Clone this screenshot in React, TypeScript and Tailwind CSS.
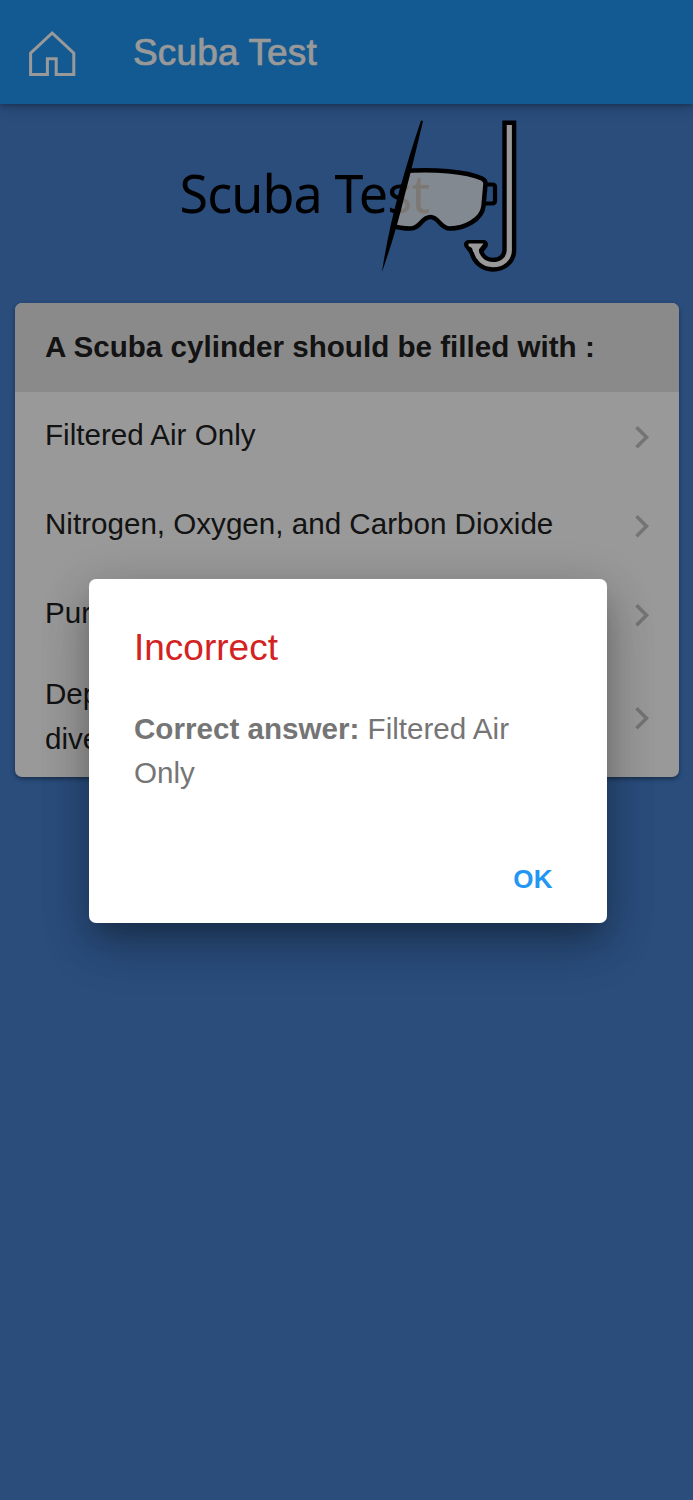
import clsx from "clsx";

// --- Quiz data ---

const QUESTION = "A Scuba cylinder should be filled with :";

const ANSWERS = [
    { id: "a", lines: ["Filtered Air Only"] },
    { id: "b", lines: ["Nitrogen, Oxygen, and Carbon Dioxide"] },
    { id: "c", lines: ["Pure Oxygen"] },
    { id: "d", lines: ["Depends on the depth of the", "dive"] },
];

function HomeIcon() {
    return (
        <svg width="50" height="50" viewBox="27 29 50 50" fill="none" stroke="white" strokeWidth="3">
            <path d="M52.2 33 L73.8 53.2 V74.5 H56.2 V58.7 H47.4 V74.5 H30.6 V53.2 Z" />
        </svg>
    );
}

function Chevron() {
    return (
        <svg width="16" height="26" viewBox="0 0 16 26" fill="none" stroke="#c2c2c5" strokeWidth="3.6">
            <path d="M1.500 3.300 L11.500 13.300 L1.500 23.300" />
        </svg>
    );
}

function Logo() {
    return (
        <svg className="block h-[199px] w-full" viewBox="0 104 693 199">
            <defs>
                <clipPath id="lineLeft">
                    <path d="M0 104 H426 L421 121 L382 272 H0 Z" />
                </clipPath>
                <clipPath id="lineRight">
                    <path d="M421 121 H693 V272 H382 Z" />
                </clipPath>
            </defs>

            {/* mask */}
            <path
                d="M402 171 C434 169 466 171 482 178.500 Q486 180.500 485.500 184 L483.500 206 C482 220 464 228.500 450 228.500 C440 228.500 439 217 430.500 217 C421 217 421 228.500 410 228.500 Q401 228.500 390 225.500 Z"
                fill="#dbe4f2"
                stroke="black"
                strokeWidth="4.500"
                strokeLinejoin="round"
                clipPath="url(#lineRight)"
            />
            <path d="M485.500 184.500 H492.500 Q495 184.500 495 187 V200.500 Q495 203.500 492 203.500 H484" fill="none" stroke="black" strokeWidth="4.200" />

            {/* wordmark, cut in two by the diagonal */}
            <g fontFamily="'Noto Sans', 'Open Sans', sans-serif" fontSize="52">
                <g clipPath="url(#lineLeft)" fill="black">
                    <text x="179.500" y="212.500" textLength="250.500">Scuba Test</text>
                </g>
                <g clipPath="url(#lineRight)" fill="#d0c9c0" aria-hidden="true">
                    <text x="179.500" y="212.500" textLength="250.500">Scuba Test</text>
                </g>
            </g>
            <path d="M421 120.500 L423 121 Q412 168 404.500 196 Q396 232 382 272 Q388 232 399.500 190 Q410 153 421 120.500 Z" fill="black" />

            {/* snorkel */}
            <path d="M509.300 120.500 V250 C509.300 259 502 264.700 493 264.700 C483.500 264.700 477 258 475.800 249" fill="none" stroke="black" strokeWidth="14" />
            <path d="M468.500 244.500 H483.500 L478.500 251 H473.500 Z" fill="black" stroke="black" strokeWidth="9" strokeLinejoin="round" />
            <path d="M509.300 125 V250 C509.300 259 502 264.700 493 264.700 C483.500 264.700 477 258 475.800 249" fill="none" stroke="white" strokeWidth="5.200" />
            <path d="M468.500 243.500 H483.500 L478.500 250 V252 H473.200 L472 248 L468.500 246 Z" fill="white" />
        </svg>
    );
}

function Answer({ lines }: { lines: string[] }) {
    return (
        <li
            className={clsx(
                "flex items-center justify-between pl-[30px] pr-[28px]",
                lines.length > 1 ? "h-[118px]" : "h-[89px]"
            )}
        >
            <div className={clsx("text-[29.6px] leading-[44.4px]", lines.length > 1 ? "pb-[3px]" : "pb-[2px]")}>
                {lines.map((line) => (
                    <div key={line}>{line}</div>
                ))}
            </div>
            <Chevron />
        </li>
    );
}

export default function App() {
    return (
        <div className="relative h-[1500px] w-[693px] overflow-hidden bg-[#4680cf] font-['Liberation_Sans',Arial,sans-serif] text-[#212121]">

            {/* Navbar */}
            <header className="relative flex h-[104px] items-center bg-[#2196f3] pl-[27px] text-white shadow-[0_2px_4px_rgba(0,0,0,0.2),0_3px_14px_rgba(0,0,0,0.22)]">
                <div className="mt-1">
                    <HomeIcon />
                </div>
                <h1 className="ml-14 text-[37px] leading-none tracking-[0.15px] [-webkit-text-stroke:0.7px_white]">Scuba Test</h1>
            </header>

            <Logo />

            {/* Question card */}
            <section className="ml-[15px] w-[664px] overflow-hidden rounded-[7px] bg-white shadow-[0_2px_4px_rgba(0,0,0,0.4)]">
                <h2 className="h-[89px] bg-[#e6e6e6] pl-[30px] pt-[22px] text-[29.6px] font-bold leading-[44px]">{QUESTION}</h2>
                <ul>
                    {ANSWERS.map((a) => (
                        <Answer key={a.id} lines={a.lines} />
                    ))}
                </ul>
            </section>

            {/* Result dialog */}
            <div className="absolute inset-0 flex items-center justify-center bg-black/40 pl-[3px] pt-px">
                <div
                    role="dialog"
                    className="flex h-[344px] w-[518px] flex-col rounded-[7px] bg-white px-[45px] pt-[47px] shadow-[0_16px_20px_-8px_rgba(0,0,0,0.18),0_24px_50px_0_rgba(0,0,0,0.2),0_10px_50px_2px_rgba(0,0,0,0.14)]"
                >
                    <h3 className="text-[37px] leading-[44px] text-[#d32222]">Incorrect</h3>
                    <p className="mt-[37px] text-[29.6px] leading-[44.4px] text-[#757575]">
                        <b>Correct answer:</b> Filtered Air Only
                    </p>
                    <div className="mt-[64px] flex justify-end pr-[9px]">
                        <button className="text-[26px] font-bold leading-[40px] tracking-[0.4px] text-[#2196f3]">OK</button>
                    </div>
                </div>
            </div>
        </div>
    );
}
